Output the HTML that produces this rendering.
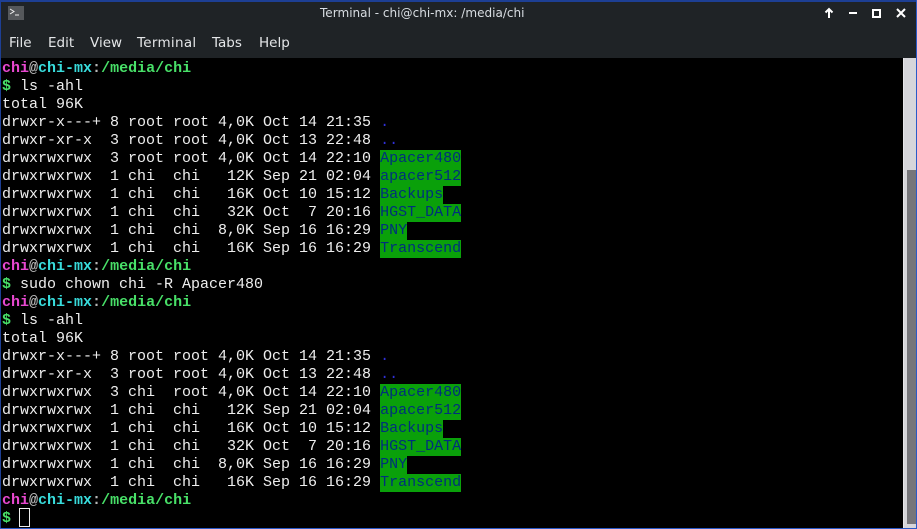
<!DOCTYPE html>
<html><head><meta charset="utf-8">
<style>
html,body{margin:0;padding:0;background:#000}
#w{position:relative;width:917px;height:529px;overflow:hidden;background:#000}
.a{position:absolute}
#tb{left:0;top:0;width:917px;height:58px;background:#1f2326}
.u{position:absolute;font-family:"DejaVu Sans",sans-serif;font-size:13.5px;line-height:18px;color:#e4e6e8;white-space:nowrap}
#t{position:absolute;left:2px;top:60px;font:15px/18px "Liberation Mono",monospace;color:#eeeeee;white-space:pre;margin:0}
.l{display:block;height:18px}
.p{color:#e848d0;font-weight:bold}
.g{color:#b8b8b8;font-weight:bold}
.c{color:#38dcdc;font-weight:bold}
.n{color:#48e068;font-weight:bold}
.b{color:#3030d8}
.d{color:#00307c;background:#0aa00a;padding-bottom:1px}
</style></head><body><div id="w">
<div class="a" id="tb"></div>
<div class="a" style="left:0;top:0;width:917px;height:2px;background:#1d3f94"></div>
<div class="a" style="left:8px;top:6px;width:16px;height:14px;background:#55585b"></div>
<svg class="a" style="left:8px;top:6px" width="16" height="14"><path d="M2 3l4 2.500-4 2.500M7 9h4" fill="none" stroke="#eee" stroke-width="1"/></svg>
<div class="u" style="left:320px;top:4px;font-size:12.05px;color:#d8dde2">Terminal - chi@chi-mx: /media/chi</div>
<svg class="a" style="left:820px;top:4px" width="90" height="18"><g fill="none" stroke="#fff" stroke-width="2"><path d="M9 14V5M5.500 8.500L9 5l3.500 3.500"/><path d="M29 9h8"/><path d="M53 6h7v7h-7z"/><path d="M77 5l8 8M85 5l-8 8"/></g></svg>
<div class="u" style="left:9px;top:34px">File</div>
<div class="u" style="left:48px;top:34px">Edit</div>
<div class="u" style="left:90px;top:34px">View</div>
<div class="u" style="left:137px;top:34px;letter-spacing:.3px">Terminal</div>
<div class="u" style="left:212px;top:34px">Tabs</div>
<div class="u" style="left:259px;top:34px">Help</div>
<pre id="t"><span class="l"><span class="p">chi</span><span class="g">@</span><span class="c">chi-mx</span><span class="g">:</span><span class="n">/media/chi</span></span><span class="l"><span class="n">$</span> ls -ahl</span><span class="l">total 96K</span><span class="l">drwxr-x---+ 8 root root 4,0K Oct 14 21:35 <span class="b">.</span></span><span class="l">drwxr-xr-x  3 root root 4,0K Oct 13 22:48 <span class="b">..</span></span><span class="l">drwxrwxrwx  3 root root 4,0K Oct 14 22:10 <span class="d">Apacer480</span></span><span class="l">drwxrwxrwx  1 chi  chi   12K Sep 21 02:04 <span class="d">apacer512</span></span><span class="l">drwxrwxrwx  1 chi  chi   16K Oct 10 15:12 <span class="d">Backups</span></span><span class="l">drwxrwxrwx  1 chi  chi   32K Oct  7 20:16 <span class="d">HGST_DATA</span></span><span class="l">drwxrwxrwx  1 chi  chi  8,0K Sep 16 16:29 <span class="d">PNY</span></span><span class="l">drwxrwxrwx  1 chi  chi   16K Sep 16 16:29 <span class="d">Transcend</span></span><span class="l"><span class="p">chi</span><span class="g">@</span><span class="c">chi-mx</span><span class="g">:</span><span class="n">/media/chi</span></span><span class="l"><span class="n">$</span> sudo chown chi -R Apacer480</span><span class="l"><span class="p">chi</span><span class="g">@</span><span class="c">chi-mx</span><span class="g">:</span><span class="n">/media/chi</span></span><span class="l"><span class="n">$</span> ls -ahl</span><span class="l">total 96K</span><span class="l">drwxr-x---+ 8 root root 4,0K Oct 14 21:35 <span class="b">.</span></span><span class="l">drwxr-xr-x  3 root root 4,0K Oct 13 22:48 <span class="b">..</span></span><span class="l">drwxrwxrwx  3 chi  root 4,0K Oct 14 22:10 <span class="d">Apacer480</span></span><span class="l">drwxrwxrwx  1 chi  chi   12K Sep 21 02:04 <span class="d">apacer512</span></span><span class="l">drwxrwxrwx  1 chi  chi   16K Oct 10 15:12 <span class="d">Backups</span></span><span class="l">drwxrwxrwx  1 chi  chi   32K Oct  7 20:16 <span class="d">HGST_DATA</span></span><span class="l">drwxrwxrwx  1 chi  chi  8,0K Sep 16 16:29 <span class="d">PNY</span></span><span class="l">drwxrwxrwx  1 chi  chi   16K Sep 16 16:29 <span class="d">Transcend</span></span><span class="l"><span class="p">chi</span><span class="g">@</span><span class="c">chi-mx</span><span class="g">:</span><span class="n">/media/chi</span></span><span class="l"><span class="n">$</span></span></pre>
<div class="a" style="left:19px;top:508px;width:9px;height:17px;border:1px solid #eee;box-sizing:content-box"></div>
<div class="a" style="left:903px;top:58px;width:13px;height:470px;background:#d6d6da"></div>
<div class="a" style="left:903px;top:58px;width:1px;height:470px;background:#e6e6e8"></div>
<div class="a" style="left:907px;top:170px;width:9px;height:354px;background:#76767a"></div>
<div class="a" style="left:0;top:0;width:1px;height:529px;background:#1d3f94"></div>
<div class="a" style="left:916px;top:0;width:1px;height:529px;background:#2a5ac8"></div>
<div class="a" style="left:0;top:528px;width:917px;height:1px;background:#2a5ac8"></div>
</div></body></html>
